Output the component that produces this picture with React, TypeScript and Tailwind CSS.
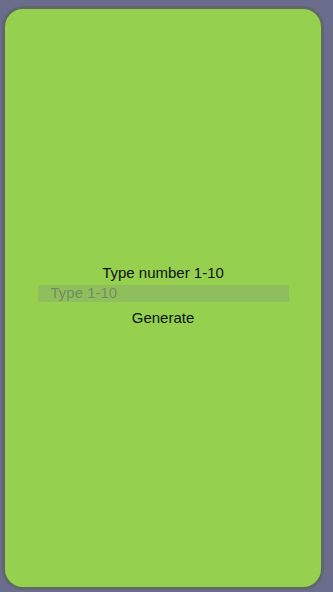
export default function App() {
  return (
    <div className="w-[333px] h-[592px] bg-[#6a6d8c] pl-[5px] pr-[12px] pt-[9px] pb-[5px]" style={{ fontFamily: '"Liberation Sans", Arial, sans-serif' }}>
      <div className="w-full h-full rounded-[18px] bg-[#95d14f] ring-[3px] ring-[#61676a] flex flex-col items-center justify-center">
        <div className="flex flex-col items-center w-full mt-[-6px]">
          <p className="text-[15px] leading-[18px] text-[#111]">Type number 1-10</p>
          <input
            placeholder="Type 1-10"
            className="mt-[3px] w-[251px] h-[17px] bg-[#8fbf5c] px-[13px] text-[15px] text-[#333] placeholder:text-[#728c60] outline-none blur-[0.3px]"
          />
          <button className="mt-[7px] text-[15px] leading-[18px] text-[#111]">Generate</button>
        </div>
      </div>
    </div>
  );
}
